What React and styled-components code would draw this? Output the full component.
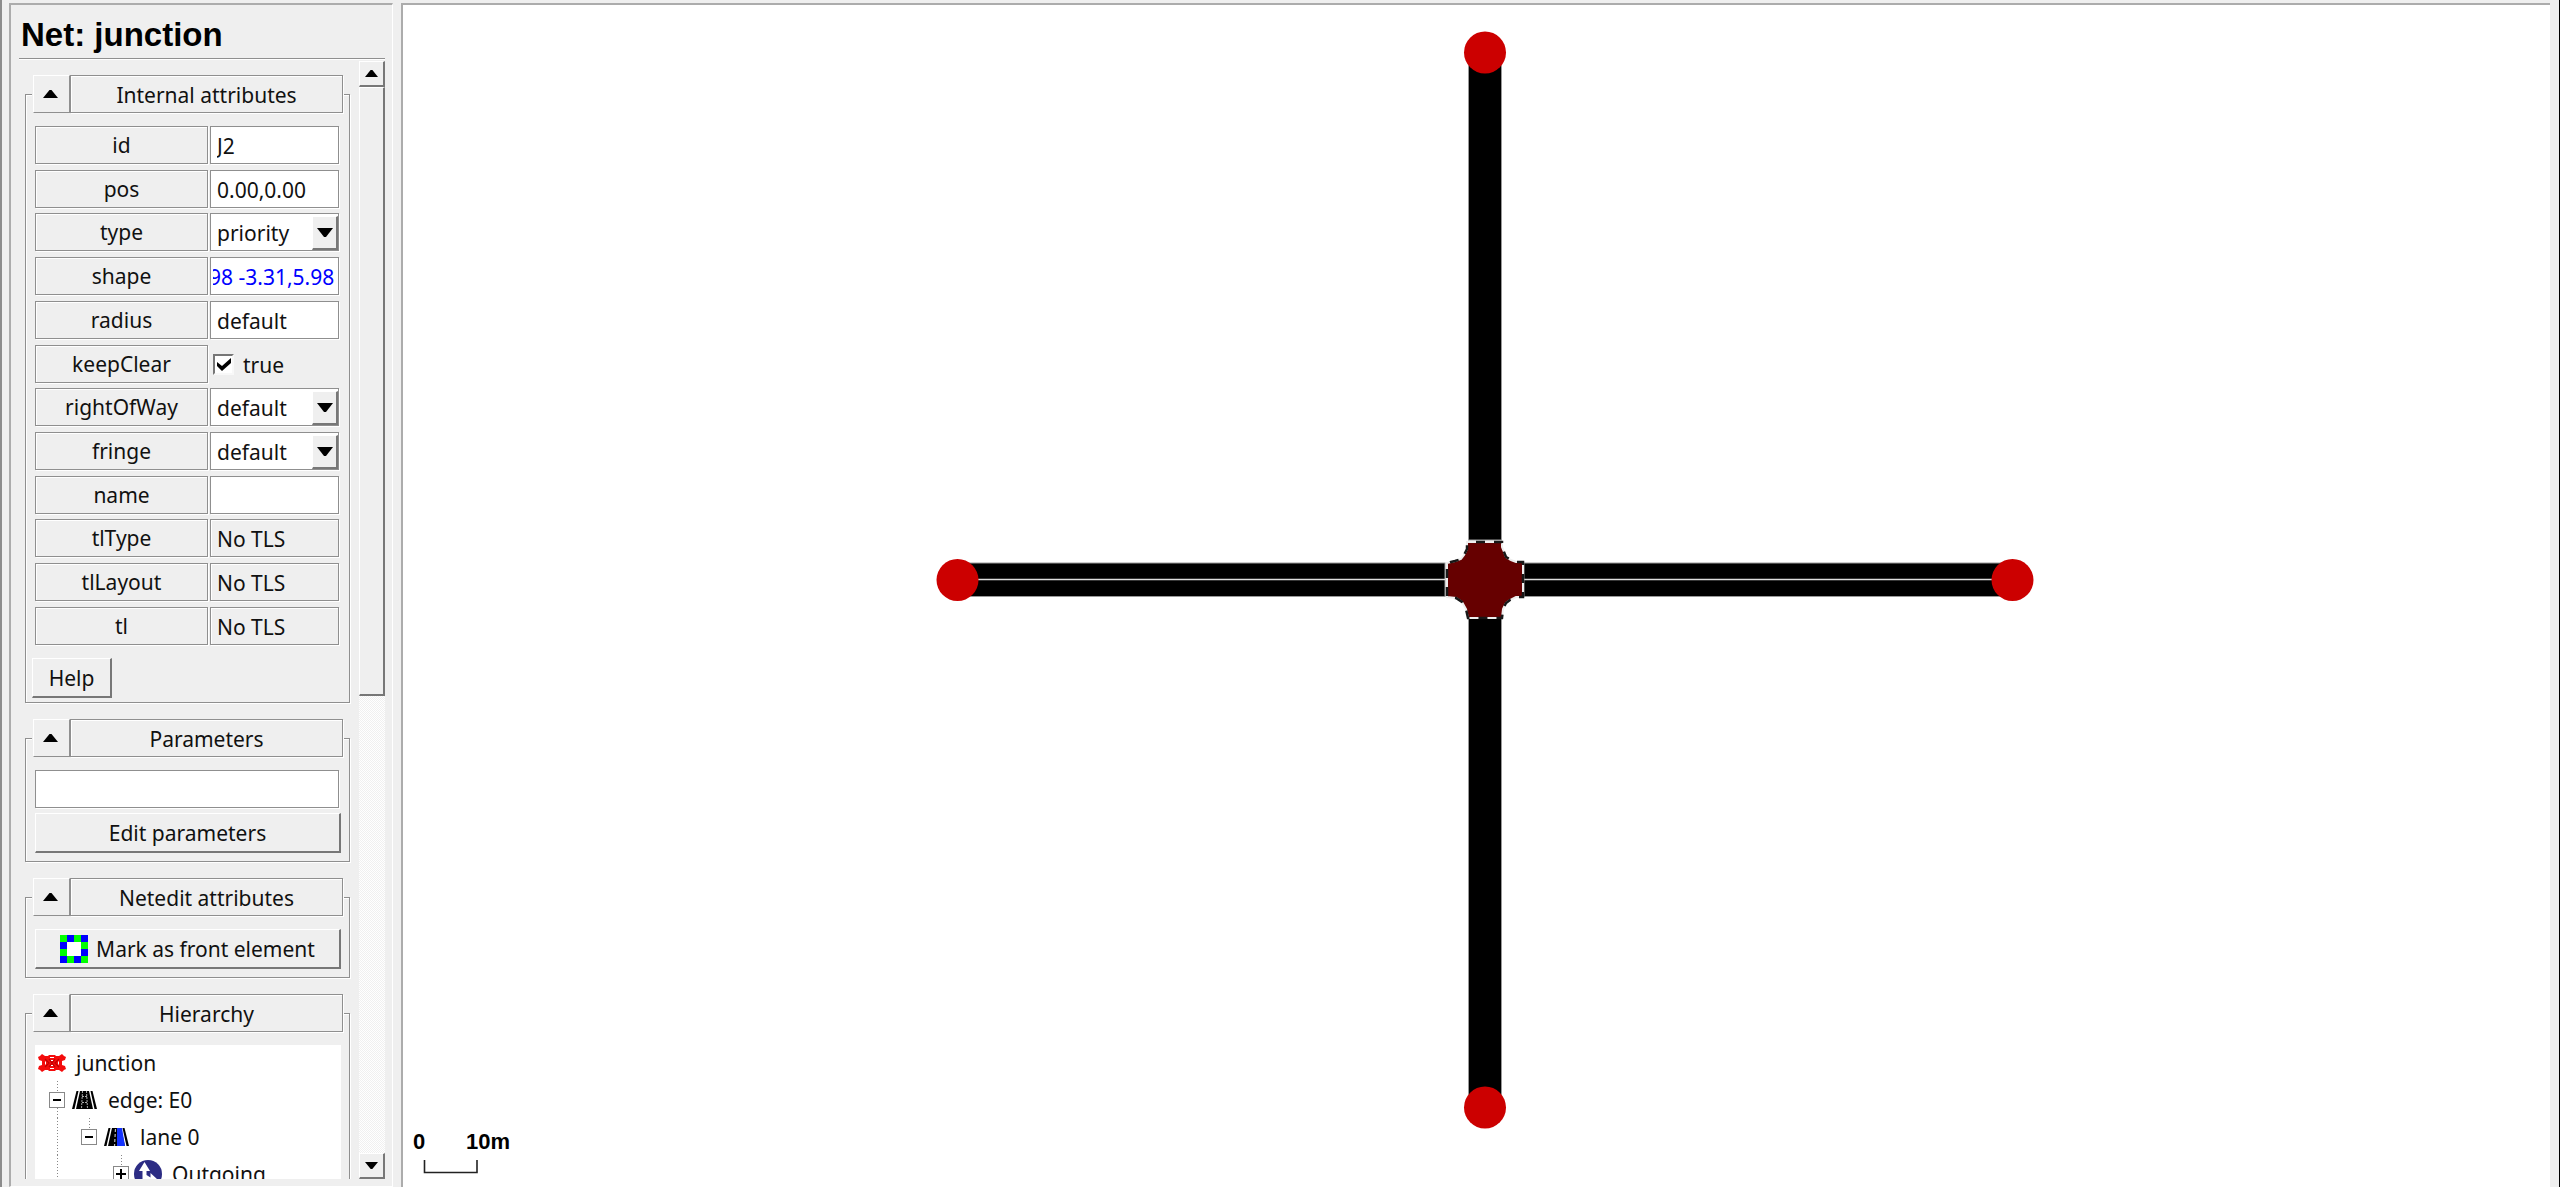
import React, { useEffect, useId, useRef, useState } from "react";
import styled, { createGlobalStyle, css } from "styled-components";

const face = "#efefef";
const line = "#8f8f8f";
const dark = "#777";

const GlobalStyle = createGlobalStyle`
  *, *::before, *::after { box-sizing: border-box; }
  body { margin: 0; background: ${face}; overflow: hidden; }
  body, input, select, button {
    font-family: "Noto Sans", "Open Sans", sans-serif;
    font-size: 21px;
    line-height: 28px;
    color: #111;
  }
`;

const etched = css`
  border: 1px solid ${line};
  box-shadow: inset 1px 1px #fff, 1px 1px #fff;
`;

const raised = css`
  background: ${face};
  border: 0 solid;
  border-width: 1px 2px 2px 1px;
  border-color: #fff ${dark} ${dark} #fff;
  border-radius: 0;
  padding: 0;
`;

const Window = styled.div`
  display: grid;
  grid-template-columns: 384px minmax(0, 1fr);
  column-gap: 8px;
  height: 100vh;
  padding: 3px 8px 0 7px;
  border-left: 2px solid #8c8c8c;
  border-right: 1px solid #000;
  background: ${face};
`;

const Sidebar = styled.aside`
  display: flex;
  flex-direction: column;
  min-height: 0;
  padding: 0 7px 7px 8px;
  border: 0 solid;
  border-width: 2px 1px 1px 2px;
  border-color: #acacac #fff #fff #acacac;
`;

const Heading = styled.h1`
  margin: 0;
  height: 54px;
  padding: 10px 0 0 2px;
  font: bold 33px/40px "Liberation Sans", Arial, sans-serif;
  color: #000;
  border-bottom: 1px solid ${line};
  box-shadow: 0 1px #fff;
`;

const Body = styled.div`
  display: grid;
  grid-template-columns: minmax(0, 1fr) 26px;
  flex: 1;
  min-height: 0;
  padding-top: 2px;
`;

const Groups = styled.div`
  display: flex;
  flex-direction: column;
  gap: 16px;
  min-height: 0;
  overflow: hidden;
  padding: 14px 9px 0 6px;
`;

const Group = styled.fieldset`
  ${etched}
  flex: none;
  min-width: 0;
  margin: 0;
  padding: 12px 8px ${(p) => (p.$tight ? 4 : 8)}px 9px;
`;

const Legend = styled.legend`
  display: flex;
  width: 312px;
  height: 39px;
  margin: 0 0 0 -3px;
  padding: 0 1px;
  background: ${face};
`;

const Collapse = styled.button`
  display: grid;
  place-items: center;
  width: 37px;
  height: 38px;
  padding: 0 2px 0 0;
  background: ${face};
  border: 1px solid;
  border-color: #fff ${line} ${line} #fff;
`;

const LegendText = styled.span`
  ${etched}
  flex: 1;
  height: 38px;
  line-height: 38px;
  text-align: center;
`;

const Attributes = styled.div`
  display: grid;
  grid-template-columns: 173px 129px;
  grid-auto-rows: 38px;
  column-gap: 2px;
  align-content: space-between;
  height: 519px;
`;

const Name = styled.label`
  ${etched}
  line-height: 37px;
  text-align: center;
`;

const Field = styled.input`
  ${etched}
  display: block;
  width: 100%;
  height: 38px;
  min-width: 0;
  padding: 2px ${(p) => (p.$blue ? 4 : 6)}px 0;
  padding-left: ${(p) => (p.$blue ? 2 : 6)}px;
  border-radius: 0;
  outline: 0;
  background: ${(p) => (p.readOnly ? face : "#fff")};
  color: ${(p) => (p.$blue ? "#00f" : "#111")};
`;

const WideField = styled(Field)`
  width: 304px;
  margin-bottom: 5px;
`;

const Combo = styled.div`
  ${etched}
  display: grid;
  background: #fff;
  > * { grid-area: 1 / 1; }
`;

const Select = styled.select`
  appearance: none;
  width: 100%;
  padding: 2px 28px 0 6px;
  border: 0;
  outline: 0;
  background: transparent;
`;

const Arrow = styled.span`
  ${raised}
  display: grid;
  place-items: center;
  justify-self: end;
  width: 26px;
  margin: 2px 0 0;
  pointer-events: none;
`;

const Check = styled.label`
  display: flex;
  align-items: center;
  gap: 9px;
  padding: 2px 0 0 3px;
`;

const Tick = styled.span`
  display: grid;
  place-items: center;
  width: 21px;
  height: 21px;
  > * { grid-area: 1 / 1; }
  svg { pointer-events: none; }
`;

const Box = styled.input`
  appearance: none;
  width: 21px;
  height: 21px;
  margin: 0;
  background: #fff;
  border: 2px solid;
  border-color: ${dark} #f8f8f8 #f8f8f8 ${dark};
  &:not(:checked) + svg { display: none; }
`;

const Button = styled.button`
  ${raised}
  display: flex;
  align-items: center;
  justify-content: center;
  gap: 8px;
  width: ${(p) => (p.$small ? "80px" : "306px")};
  height: 40px;
  margin: ${(p) => (p.$small ? "13px 0 0 -3px" : "0")};
`;

const Tree = styled.ul`
  list-style: none;
  margin: 0;
  width: 306px;
  padding: 0 0 0 3px;
  background: #fff;
`;

const Node = styled.li`
  display: flex;
  align-items: center;
  height: 37px;
  line-height: 36px;
  padding-bottom: 2px;
`;

const Guide = styled.span`
  display: flex;
  flex-direction: column;
  align-items: center;
  width: 32px;
  height: 37px;
  padding-left: 6px;
`;

const Dots = styled.span`
  flex: 1;
  width: 1px;
  background: ${(p) => (p.$off ? "none" : "repeating-linear-gradient(#888 0 1px, #fff 1px 3px)")};
`;

const Expander = styled.button`
  display: grid;
  place-items: center;
  width: 16px;
  height: 16px;
  padding: 0;
  background: #fff;
  border: 1px solid #888;
`;

const Slot = styled.span`
  display: flex;
  justify-content: ${(p) => (p.$full ? "center" : "flex-start")};
  width: 28px;
  margin-right: 10px;
  padding-left: ${(p) => (p.$full ? 0 : 2)}px;
`;

const Scrollbar = styled.div`
  display: flex;
  flex-direction: column;
  background: repeating-conic-gradient(#fff 0 25%, #f0f0f0 0 50%) 0 0 / 2px 2px;
`;

const Step = styled.button`
  ${raised}
  display: grid;
  place-items: center;
  height: 26px;
`;

const Thumb = styled.div`
  ${raised}
  height: 609px;
  margin-bottom: auto;
`;

const View = styled.main`
  min-width: 0;
  min-height: 0;
  margin-right: 1px;
  background: #fff;
  border: 0 solid #acacac;
  border-width: 2px 0 0 2px;
  svg { display: block; width: 100%; height: 100%; }
`;

const Up = ({ w = 15, h = 8 }) => (
  <svg width={w} height={h} viewBox="0 0 15 8" preserveAspectRatio="none" aria-hidden="true">
    <path d="M0 8L6.500 0h2L15 8z" />
  </svg>
);

const Down = ({ w = 16, h = 9 }) => (
  <svg width={w} height={h} viewBox="0 0 16 9" preserveAspectRatio="none" aria-hidden="true">
    <path d="M0 0h16L9 9H7z" />
  </svg>
);

const TickMark = () => (
  <svg width="14" height="13" viewBox="0 0 14 13" aria-hidden="true">
    <path d="M0 4l5 4 9-8v5l-9 8-5-5z" />
  </svg>
);

const FrontIcon = () => {
  const cells = [
    [0, 0, 1], [1, 0, 0], [2, 0, 1], [3, 0, 0],
    [0, 1, 0], [3, 1, 1], [0, 2, 1], [3, 2, 0],
    [0, 3, 0], [1, 3, 1], [2, 3, 0], [3, 3, 1],
  ];
  return (
    <svg width="28" height="28" viewBox="0 0 28 28" shapeRendering="crispEdges" aria-hidden="true">
      <rect x="6" y="6" width="16" height="16" fill="#fff" />
      {cells.map(([x, y, green]) => (
        <rect key={`${x}${y}`} x={x * 7} y={y * 7} width="7" height="7" fill={green ? "#0f0" : "#00f"} />
      ))}
    </svg>
  );
};

const JunctionIcon = () => (
  <svg width="28" height="18" viewBox="0 0 28 18" aria-hidden="true">
    <path
      fill="#f40c0c"
      d="M0 3l2-1 2-2 3 2h3l1-1h6l1 1h3l3-2 2 2 2 1-1 3-3 1v4l3 1 1 3-2 1-2 2-3-2h-3l-1 1h-6l-1-1H7l-3 2-2-2-2-1 1-3 3-1V7L1 6z"
    />
    <path d="M7 5l4 4-4 4M21 5l-4 4 4 4M11 5l6 8M17 5l-6 8" stroke="#c00000" strokeWidth="1.200" fill="none" />
    <path d="M12 3.500h4M12 14.500h4M7.500 7.500v3M20.500 7.500v3M13 6.500h2M13 11.500h2" stroke="#fff" strokeWidth="1" />
  </svg>
);

const RoadIcon = ({ lane }) => (
  <svg width="25" height="18" viewBox="0 0 25 18" aria-hidden="true">
    <path d="M4.500 0h2L2.500 18H0zM18.500 0h2L25 18h-2.500z" fill="#000" />
    <path d="M8 0h9l4 18H4z" fill="#000" />
    {lane && <path d="M13 0h5l3 18h-8z" fill="#1433ff" />}
    {lane ? (
      <path d="M11.500 1L10.500 18" stroke="#bbb" strokeWidth="1.200" strokeDasharray="3 2" />
    ) : (
      <path d="M10.500 0L9.500 18M14.500 0l1 18M10 5.500h5M10 11.500h5" stroke="#aaa" strokeWidth="1" strokeDasharray="2 1" fill="none" />
    )}
  </svg>
);

const OutgoingIcon = () => (
  <svg width="28" height="28" viewBox="0 0 28 28" aria-hidden="true">
    <circle cx="14" cy="14" r="14" fill="#2c2c84" />
    <path d="M8.500 24V11H5l5.500-9L16 11h-3.500v4l4 2.500V13l7 6.500-7 5.500v-4l-4-2V24z" fill="#fff" />
  </svg>
);

const Sign = ({ plus }) => (
  <svg width="10" height="10" viewBox="0 0 10 10" aria-hidden="true">
    <path d={plus ? "M0 5h10M5 0v10" : "M1 5h8"} stroke="#000" strokeWidth="2" />
  </svg>
);

function Panel({ title, tight, children }) {
  return (
    <Group $tight={tight}>
      <Legend>
        <Collapse type="button" aria-label={`Collapse ${title}`}><Up /></Collapse>
        <LegendText>{title}</LegendText>
      </Legend>
      {children}
    </Group>
  );
}

function TextValue({ id, value, blue, locked }) {
  const ref = useRef(null);
  useEffect(() => {
    if (blue) ref.current.scrollLeft = ref.current.scrollWidth;
  }, [blue]);
  return <Field ref={ref} id={id} defaultValue={value} readOnly={locked} $blue={blue} />;
}

function Attribute({ name, kind, value }) {
  const id = useId();
  const [checked, setChecked] = useState(true);
  return (
    <>
      <Name htmlFor={id}>{name}</Name>
      {kind === "combo" && (
        <Combo>
          <Select id={id} defaultValue={value}><option>{value}</option></Select>
          <Arrow><Down /></Arrow>
        </Combo>
      )}
      {kind === "check" && (
        <Check>
          <Tick>
            <Box id={id} type="checkbox" checked={checked} onChange={(e) => setChecked(e.target.checked)} />
            <TickMark />
          </Tick>
          {String(checked)}
        </Check>
      )}
      {!["combo", "check"].includes(kind) && (
        <TextValue id={id} value={value} blue={kind === "blue"} locked={kind === "locked"} />
      )}
    </>
  );
}

const attributes = [
  ["id", "text", "J2"],
  ["pos", "text", "0.00,0.00"],
  ["type", "combo", "priority"],
  ["shape", "blue", "98 -3.31,5.98"],
  ["radius", "text", "default"],
  ["keepClear", "check", true],
  ["rightOfWay", "combo", "default"],
  ["fringe", "combo", "default"],
  ["name", "text", ""],
  ["tlType", "locked", "No TLS"],
  ["tlLayout", "locked", "No TLS"],
  ["tl", "locked", "No TLS"],
];

function Network() {
  const outline =
    "M1467 542H1502V547L1504 552L1506 557L1511 560L1516 562H1523V597H1516L1510 600L1506 603L1503 609L1502 618H1468L1466 609L1462 602L1456 598L1447 597V563L1455 561L1461 559L1464 555L1467 549Z";
  return (
    <svg viewBox="403 5 2147 1182" role="img" aria-label="Road network">
      <g fill="#000" stroke="#999" strokeWidth="1">
        <rect x="1468.500" y="52" width="33" height="488" />
        <rect x="1468.500" y="618" width="33" height="489" />
        <rect x="957" y="563" width="488" height="33.500" />
        <rect x="1524" y="563" width="489" height="33.500" />
      </g>
      <path d="M957 579.500H1445M1524 579.500H2013" stroke="#ddd" strokeWidth="1.600" />
      <g fill="#c00">
        <circle cx="1485" cy="52.500" r="21" />
        <circle cx="1485" cy="1107.500" r="21" />
        <circle cx="957.500" cy="580" r="21" />
        <circle cx="2012.500" cy="580" r="21" />
      </g>
      <path d={outline} fill="#600" stroke="#eee" strokeWidth="2" />
      <path d={outline} fill="none" stroke="#181818" strokeWidth="2.500" strokeDasharray="9 9" strokeDashoffset="9" />
      <path d="M424.500 1160v12.500h52.500v-12.500" fill="none" stroke="#222" strokeWidth="1.600" />
      <g fontFamily="'Liberation Sans', Arial, sans-serif" fontWeight="bold" fontSize="22">
        <text x="413" y="1149">0</text>
        <text x="466" y="1149">10m</text>
      </g>
    </svg>
  );
}

export default function App() {
  return (
    <>
      <GlobalStyle />
      <Window>
        <Sidebar>
          <Heading>Net: junction</Heading>
          <Body>
            <Groups>
              <Panel title="Internal attributes" tight>
                <Attributes>
                  {attributes.map(([name, kind, value]) => (
                    <Attribute key={name} name={name} kind={kind} value={value} />
                  ))}
                </Attributes>
                <Button type="button" $small>Help</Button>
              </Panel>
              <Panel title="Parameters">
                <WideField aria-label="Parameters" />
                <Button type="button">Edit parameters</Button>
              </Panel>
              <Panel title="Netedit attributes">
                <Button type="button"><FrontIcon />Mark as front element</Button>
              </Panel>
              <Panel title="Hierarchy">
                <Tree>
                  <Node><Slot $full><JunctionIcon /></Slot>junction</Node>
                  <Node>
                    <Guide><Dots /><Expander aria-label="Collapse edge: E0"><Sign /></Expander><Dots /></Guide>
                    <Slot><RoadIcon /></Slot>edge: E0
                  </Node>
                  <Node>
                    <Guide><Dots /></Guide>
                    <Guide><Dots /><Expander aria-label="Collapse lane 0"><Sign /></Expander><Dots $off /></Guide>
                    <Slot><RoadIcon lane /></Slot>lane 0
                  </Node>
                  <Node>
                    <Guide><Dots /></Guide>
                    <Guide />
                    <Guide><Dots /><Expander aria-label="Expand Outgoing"><Sign plus /></Expander><Dots $off /></Guide>
                    <Slot $full><OutgoingIcon /></Slot>Outgoing
                  </Node>
                </Tree>
              </Panel>
            </Groups>
            <Scrollbar>
              <Step type="button" aria-label="Scroll up"><Up w={13} h={7} /></Step>
              <Thumb />
              <Step type="button" aria-label="Scroll down"><Down w={13} h={7} /></Step>
            </Scrollbar>
          </Body>
        </Sidebar>
        <View><Network /></View>
      </Window>
    </>
  );
}
